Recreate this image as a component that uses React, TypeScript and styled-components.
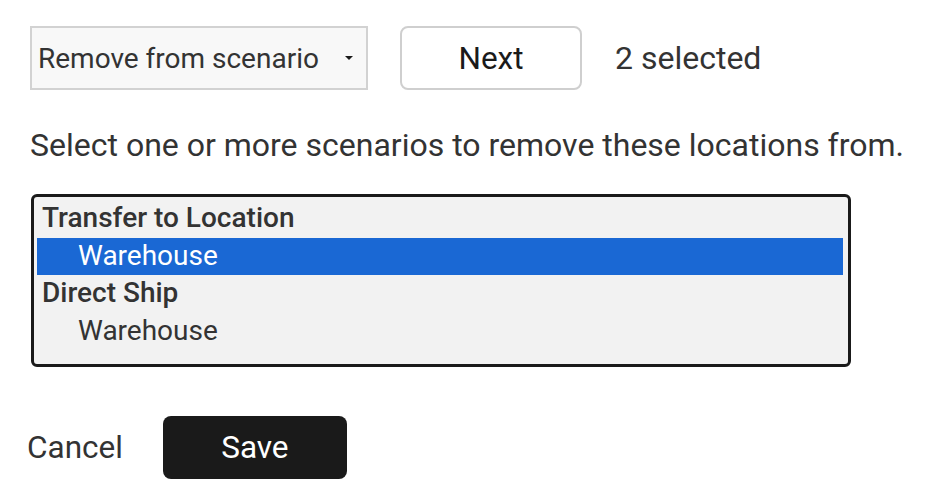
import React from 'react'
import styled, { createGlobalStyle } from 'styled-components'

const GlobalStyle = createGlobalStyle`
  body {
    margin: 0;
    background: #ffffff;
    font-family: Roboto, "Liberation Sans", sans-serif;
    color: #333333;
  }
`

const Page = styled.div`
  display: flex;
  flex-direction: column;
  padding: 26px 0 0 30px;
`

const Toolbar = styled.div`
  display: flex;
  align-items: center;
  height: 64px;
`

const Dropdown = styled.div`
  box-sizing: border-box;
  display: flex;
  align-items: center;
  justify-content: space-between;
  width: 338px;
  height: 64px;
  padding: 0 13px 0 6px;
  background: #f8f8f8;
  border: 2px solid #d2d2d2;
  font-size: 28px;
  color: #333;
`

const Caret = styled.span`
  width: 0;
  height: 0;
  border-left: 4.5px solid transparent;
  border-right: 4.5px solid transparent;
  border-top: 4px solid #1a1a1a;
`

const NextButton = styled.button`
  box-sizing: border-box;
  width: 182px;
  height: 64px;
  margin-left: 32px;
  background: #fff;
  border: 2px solid #cfcfcf;
  border-radius: 8px;
  font-family: inherit;
  font-size: 31.5px;
  color: #1a1a1a;
`

const Count = styled.span`
  margin-left: 33px;
  font-size: 32px;
  color: #333;
`

const Hint = styled.p`
  margin: 35px 0 0;
  font-size: 32px;
  line-height: 40px;
  color: #333;
`

const ListBox = styled.div`
  box-sizing: border-box;
  width: 820px;
  height: 173px;
  margin-top: 29px;
  margin-left: 1px;
  padding: 3px 5px 3px 3px;
  background: #f2f2f2;
  border: 3px solid #1a1a1a;
  border-radius: 6px;
`

const GroupLabel = styled.div`
  height: 37.5px;
  line-height: 36px;
  padding-left: 5px;
  font-size: 28px;
  font-weight: 500;
  color: #333;
`

const Option = styled.div<{ $selected?: boolean }>`
  height: 37.5px;
  line-height: 36px;
  padding-left: 41px;
  font-size: 28px;
  color: ${p => (p.$selected ? '#ffffff' : '#333')};
  background: ${p => (p.$selected ? '#1a68d4' : 'transparent')};
`

const Actions = styled.div`
  display: flex;
  align-items: center;
  margin-top: 49px;
  margin-left: -3px;
`

const CancelButton = styled.button`
  padding: 0;
  background: none;
  border: none;
  font-family: inherit;
  font-size: 31.5px;
  color: #333;
`

const SaveButton = styled.button`
  width: 184px;
  height: 63px;
  margin-left: 40px;
  background: #1a1a1a;
  border: none;
  border-radius: 8px;
  font-family: inherit;
  font-size: 31.5px;
  color: #fff;
`

const App = () => (
  <>
    <GlobalStyle />
    <Page>
      <Toolbar>
        <Dropdown>
          <span>Remove from scenario</span>
          <Caret />
        </Dropdown>
        <NextButton>Next</NextButton>
        <Count>2 selected</Count>
      </Toolbar>
      <Hint>Select one or more scenarios to remove these locations from.</Hint>
      <ListBox>
        <GroupLabel>Transfer to Location</GroupLabel>
        <Option $selected>Warehouse</Option>
        <GroupLabel>Direct Ship</GroupLabel>
        <Option>Warehouse</Option>
      </ListBox>
      <Actions>
        <CancelButton>Cancel</CancelButton>
        <SaveButton>Save</SaveButton>
      </Actions>
    </Page>
  </>
)

export default App
